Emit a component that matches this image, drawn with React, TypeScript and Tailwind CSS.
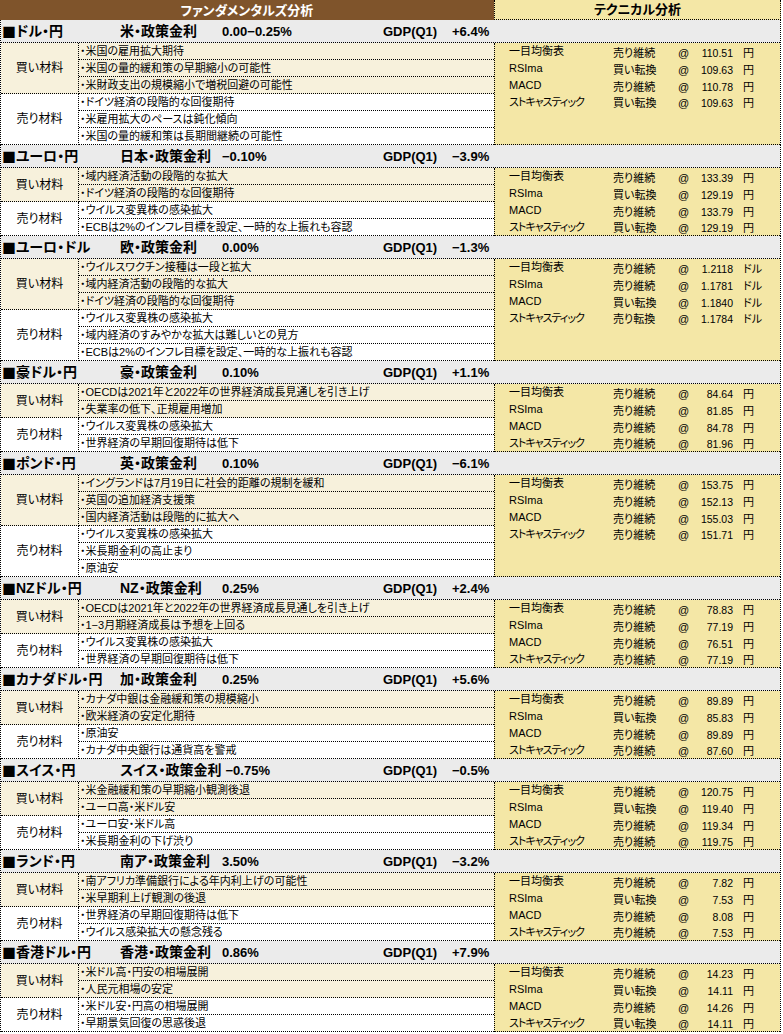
import React from "react";

type Section = {
  name: string;
  policy: string;
  rate: string;
  gdp: string;
  unit: string;
  buy: string[];
  sell: string[];
  tech: [string, string][];
};

const indicators = ["一目均衡表", "RSIma", "MACD", "ストキャスティック"];

const sections: Section[] = [
  {
    name: "ドル・円",
    policy: "米・政策金利",
    rate: "0.00−0.25%",
    gdp: "+6.4%",
    unit: "円",
    buy: ["米国の雇用拡大期待", "米国の量的緩和策の早期縮小の可能性", "米財政支出の規模縮小で増税回避の可能性"],
    sell: ["ドイツ経済の段階的な回復期待", "米雇用拡大のペースは鈍化傾向", "米国の量的緩和策は長期間継続の可能性"],
    tech: [["売り維続", "110.51"], ["買い転換", "109.63"], ["売り維続", "110.78"], ["買い転換", "109.63"]],
  },
  {
    name: "ユーロ・円",
    policy: "日本・政策金利",
    rate: "−0.10%",
    gdp: "−3.9%",
    unit: "円",
    buy: ["域内経済活動の段階的な拡大", "ドイツ経済の段階的な回復期待"],
    sell: ["ウイルス変異株の感染拡大", "ECBは2%のインフレ目標を設定、一時的な上振れも容認"],
    tech: [["売り維続", "133.39"], ["買い転換", "129.19"], ["売り維続", "133.79"], ["買い転換", "129.19"]],
  },
  {
    name: "ユーロ・ドル",
    policy: "欧・政策金利",
    rate: "0.00%",
    gdp: "−1.3%",
    unit: "ドル",
    buy: ["ウイルスワクチン接種は一段と拡大", "域内経済活動の段階的な拡大", "ドイツ経済の段階的な回復期待"],
    sell: ["ウイルス変異株の感染拡大", "域内経済のすみやかな拡大は難しいとの見方", "ECBは2%のインフレ目標を設定、一時的な上振れも容認"],
    tech: [["売り維続", "1.2118"], ["売り維続", "1.1781"], ["買い転換", "1.1840"], ["売り転換", "1.1784"]],
  },
  {
    name: "豪ドル・円",
    policy: "豪・政策金利",
    rate: "0.10%",
    gdp: "+1.1%",
    unit: "円",
    buy: ["OECDは2021年と2022年の世界経済成長見通しを引き上げ", "失業率の低下、正規雇用増加"],
    sell: ["ウイルス変異株の感染拡大", "世界経済の早期回復期待は低下"],
    tech: [["売り維続", "84.64"], ["売り維続", "81.85"], ["売り維続", "84.78"], ["売り維続", "81.96"]],
  },
  {
    name: "ポンド・円",
    policy: "英・政策金利",
    rate: "0.10%",
    gdp: "−6.1%",
    unit: "円",
    buy: ["イングランドは7月19日に社会的距離の規制を緩和", "英国の追加経済支援策", "国内経済活動は段階的に拡大へ"],
    sell: ["ウイルス変異株の感染拡大", "米長期金利の高止まり", "原油安"],
    tech: [["売り維続", "153.75"], ["売り維続", "152.13"], ["売り維続", "155.03"], ["売り維続", "151.71"]],
  },
  {
    name: "NZドル・円",
    policy: "NZ・政策金利",
    rate: "0.25%",
    gdp: "+2.4%",
    unit: "円",
    buy: ["OECDは2021年と2022年の世界経済成長見通しを引き上げ", "1−3月期経済成長は予想を上回る"],
    sell: ["ウイルス変異株の感染拡大", "世界経済の早期回復期待は低下"],
    tech: [["売り維続", "78.83"], ["売り維続", "77.19"], ["売り維続", "76.51"], ["売り維続", "77.19"]],
  },
  {
    name: "カナダドル・円",
    policy: "加・政策金利",
    rate: "0.25%",
    gdp: "+5.6%",
    unit: "円",
    buy: ["カナダ中銀は金融緩和策の規模縮小", "欧米経済の安定化期待"],
    sell: ["原油安", "カナダ中央銀行は通貨高を警戒"],
    tech: [["売り維続", "89.89"], ["買い転換", "85.83"], ["売り維続", "89.89"], ["売り維続", "87.60"]],
  },
  {
    name: "スイス・円",
    policy: "スイス・政策金利",
    rate: "−0.75%",
    gdp: "−0.5%",
    unit: "円",
    buy: ["米金融緩和策の早期縮小観測後退", "ユーロ高・米ドル安"],
    sell: ["ユーロ安・米ドル高", "米長期金利の下げ渋り"],
    tech: [["売り維続", "120.75"], ["買い転換", "119.40"], ["売り維続", "119.34"], ["売り維続", "119.75"]],
  },
  {
    name: "ランド・円",
    policy: "南ア・政策金利",
    rate: "3.50%",
    gdp: "−3.2%",
    unit: "円",
    buy: ["南アフリカ準備銀行による年内利上げの可能性", "米早期利上げ観測の後退"],
    sell: ["世界経済の早期回復期待は低下", "ウイルス感染拡大の懸念残る"],
    tech: [["売り維続", "7.82"], ["買い転換", "7.53"], ["売り維続", "8.08"], ["売り維続", "7.53"]],
  },
  {
    name: "香港ドル・円",
    policy: "香港・政策金利",
    rate: "0.86%",
    gdp: "+7.9%",
    unit: "円",
    buy: ["米ドル高・円安の相場展開", "人民元相場の安定"],
    sell: ["米ドル安・円高の相場展開", "早期景気回復の思惑後退"],
    tech: [["売り維続", "14.23"], ["買い転換", "14.11"], ["売り維続", "14.26"], ["買い転換", "14.11"]],
  },
];

function Group({ label, items, bg }: { label: string; items: string[]; bg: string }) {
  return (
    <div className={`flex ${bg}`}>
      <div className="w-[78px] shrink-0 border-r border-b border-dotted border-black flex items-center justify-center text-[12px]">
        {label}
      </div>
      <div className="w-[415px] flex flex-col">
        {items.map((t) => (
          <div
            key={t}
            className="h-[17px] border-b border-dotted border-black flex items-center pl-[1px] text-[11px] whitespace-nowrap overflow-hidden"
          >
            ・{t}
          </div>
        ))}
      </div>
    </div>
  );
}

function Block({ s }: { s: Section }) {
  return (
    <div className="border-l border-r border-dotted border-black">
      <div className="h-[23px] bg-[#ebebeb] border-b border-dotted border-black flex items-center font-bold whitespace-nowrap">
        <div className="w-[119px] pl-[1px] text-[14px] flex items-center">
          <span className="font-['Noto_Sans_CJK_JP',sans-serif]">■</span>
          {s.name}
        </div>
        <div className="w-[263px] flex items-center">
          <span className="min-w-[102px] pr-[4px] text-[14px]">{s.policy}</span>
          <span className="text-[13px]">{s.rate}</span>
        </div>
        <span className="w-[69px] text-[13px]">GDP(Q1)</span>
        <span className="text-[13px]">{s.gdp}</span>
      </div>
      <div className="flex">
        <div className="flex flex-col">
          <Group label="買い材料" items={s.buy} bg="bg-[#f7f1dc]" />
          <Group label="売り材料" items={s.sell} bg="bg-white" />
        </div>
        <div className="flex-1 bg-[#f4e7a6] border-l border-b border-dotted border-black flex flex-col">
          {s.tech.map(([sig, val], i) => (
            <div
              key={i}
              className={`${i === 3 ? "h-[16px]" : "h-[17px]"} flex items-center text-[11px] whitespace-nowrap`}
            >
              <span className={`w-[118px] pl-[14px] ${i === 3 ? "tracking-[-1px]" : ""}`}>{indicators[i]}</span>
              <span className="w-[65px] pt-[3px]">{sig}</span>
              <span className="w-[20px] pt-[3px]">@</span>
              <span className="w-[35px] pt-[3px] text-right text-[10.5px]">{val}</span>
              <span className="pl-[10px] pt-[3px]">{s.unit}</span>
            </div>
          ))}
        </div>
      </div>
    </div>
  );
}

export default function App() {
  return (
    <div className="w-[781px] bg-white text-black font-['Liberation_Sans','Noto_Sans_CJK_JP',sans-serif] [font-feature-settings:'palt'] leading-none">
      <div className="flex h-[20px]">
        <div className="w-[494px] bg-[#7f542b] text-white font-bold text-[13px] flex items-center justify-center">
          ファンダメンタルズ分析
        </div>
        <div className="flex-1 bg-[#f4e7a6] border-l border-r border-b border-dotted border-black font-bold text-[13px] flex items-center justify-center">
          テクニカル分析
        </div>
      </div>
      {sections.map((s) => (
        <Block key={s.name} s={s} />
      ))}
    </div>
  );
}
